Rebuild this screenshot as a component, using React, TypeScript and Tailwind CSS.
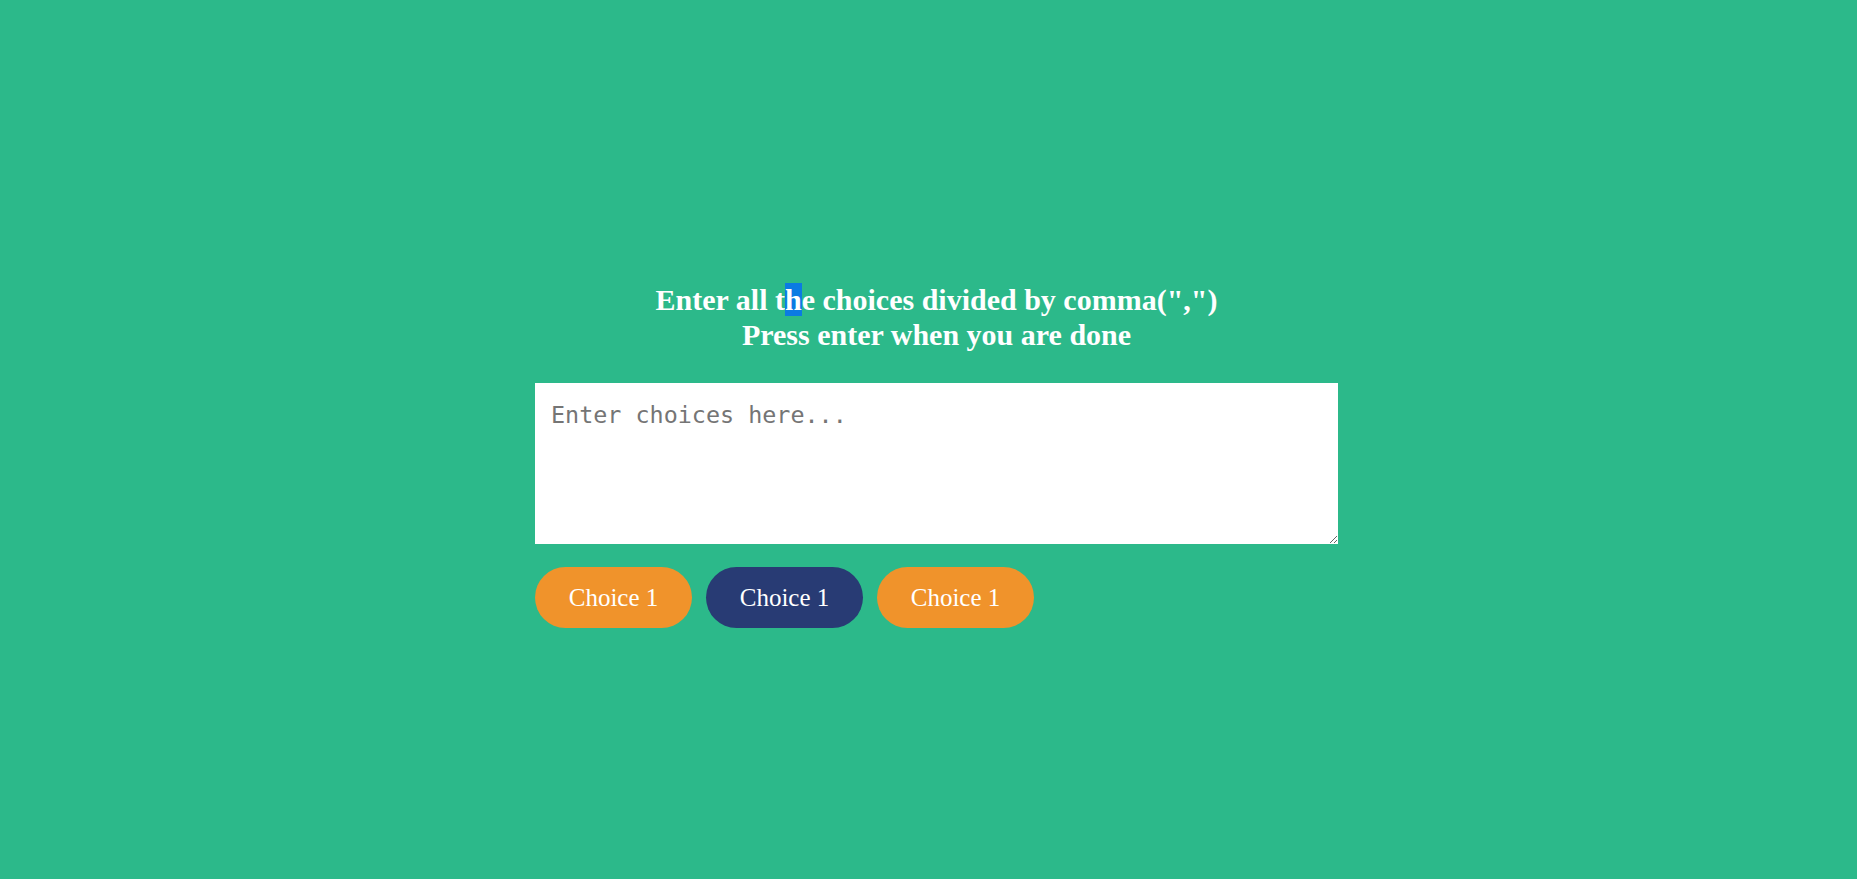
export default function App() {
  const choices = [
    { label: "Choice 1", color: "bg-[#f0932b]" },
    { label: "Choice 1", color: "bg-[#283b74]" },
    { label: "Choice 1", color: "bg-[#f0932b]" },
  ];

  return (
    <div className="min-h-screen w-full bg-[#2cb98a] flex justify-center pl-[16px] pt-[283px]">
      <div className="w-[803px] flex flex-col">
        <h3 className="text-center text-white font-bold text-[30px] leading-[34.5px] font-['Liberation_Serif',serif]">
          Enter all t<span className="bg-[#0b7be3]">h</span>e choices divided by comma(",")
          <br />
          Press enter when you are done
        </h3>
        <textarea
          placeholder="Enter choices here..."
          className="mt-[31px] w-[803px] h-[161px] bg-white px-[16px] pt-[15px] pb-[12px] text-[23.4px] font-['DejaVu_Sans_Mono',monospace] placeholder:text-[#757575] outline-none resize"
        />
        <div className="mt-[23px] flex gap-[14px]">
          {choices.map((c, i) => (
            <span
              key={i}
              className={`${c.color} h-[61px] w-[157px] rounded-full flex items-center justify-center text-white text-[25px] font-['Liberation_Serif',serif]`}
            >
              {c.label}
            </span>
          ))}
        </div>
      </div>
    </div>
  );
}
